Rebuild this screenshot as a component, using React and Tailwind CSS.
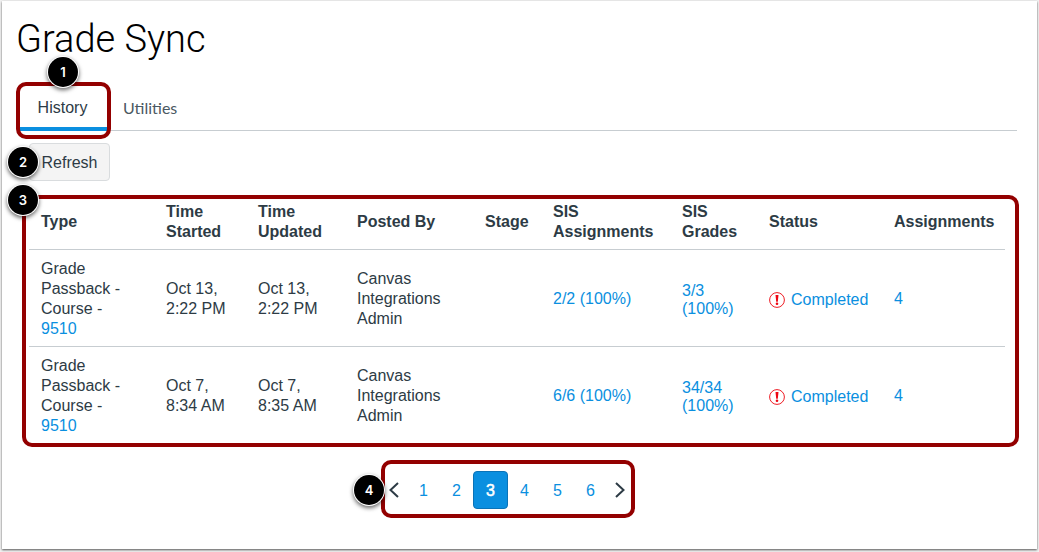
import React from "react";

const jobs = [
  { started: ["Oct 13,", "2:22 PM"], updated: ["Oct 13,", "2:22 PM"], assignments: "2/2 (100%)", grades: ["3/3", "(100%)"] },
  { started: ["Oct 7,", "8:34 AM"], updated: ["Oct 7,", "8:35 AM"], assignments: "6/6 (100%)", grades: ["34/34", "(100%)"] },
];

function Badge({ n, className }) {
  return (
    <span
      className={`absolute z-10 flex size-[30px] items-center justify-center rounded-full bg-black font-['Inter',sans-serif] text-[13px] font-semibold text-white ring-1 ring-white shadow-[0_2px_4px_1px_rgba(0,0,0,0.6)] ${className}`}
    >
      {n}
    </span>
  );
}

function Chevron({ d }) {
  return (
    <svg width="10" height="16" viewBox="0 0 10 16" fill="none" stroke="#2d3b45" strokeWidth="2" aria-hidden="true">
      <path d={d} />
    </svg>
  );
}

function Alert() {
  return (
    <svg className="shrink-0" width="16" height="16" viewBox="0 0 16 16" aria-hidden="true">
      <circle cx="8" cy="8" r="7.4" fill="none" stroke="#ee1c24" strokeWidth="1" />
      <path d="M6.5 3h3L8.8 9.7H7.2z" fill="#ee0612" />
      <circle cx="8" cy="11.8" r="1.3" fill="#ee0612" />
    </svg>
  );
}

function Lines({ items }) {
  return items.map((t) => (
    <span key={t} className="block whitespace-nowrap">{t}</span>
  ));
}

function Page({ n }) {
  return (
    <button type="button" className="h-[38px] w-[33px] pt-0.5 text-[#0a8fe0]">{n}</button>
  );
}

export default function App() {
  const link = "text-[#0a8fe0]";
  return (
    <div className="flex min-h-screen bg-[#f1f1f1] px-[2px] pt-px pb-[3px] font-['Liberation_Sans',Arial,sans-serif] text-base leading-5 text-[#2d3b45]">
      <main className="min-w-0 flex-1 bg-white pr-[18px] pl-[14px] shadow-[0_1px_2px_rgba(0,0,0,0.65)]">
        <h1 className="pt-4 font-['Roboto',sans-serif] text-[38px] leading-[44px] font-light text-black">Grade Sync</h1>

        <nav className="mt-[25px] mr-[2px] ml-1 flex border-b border-[#c7cdd1]">
          <a href="#history" className="relative -mb-px flex h-[45px] w-[87px] items-center justify-center border-b-4 border-[#0a8fe0] pt-0.5 pr-0.5">
            History
            <span className="absolute -inset-x-1 -top-1 -bottom-3 rounded-[10px] border-4 border-[#930000]" />
            <Badge n={1} className="-top-[29px] left-[28px]" />
          </a>
          <a href="#utilities" className="flex items-center pl-4 font-['Lato',sans-serif] text-[#4a5862]">Utilities</a>
        </nav>

        <div className="relative mt-3 flex">
          <button type="button" className="ml-[13px] h-[38px] w-[81px] rounded border border-[#d9dcde] bg-[#f4f4f4] pt-0.5">Refresh</button>
          <Badge n={2} className="top-1 -left-2" />
        </div>

        <section className="relative mt-[14px] ml-[6px] rounded-[10px] border-4 border-[#930000] pr-[10px] pl-[3px]">
          <Badge n={3} className="-top-[14px] -left-[18px]" />
          <table className="w-full table-fixed border-collapse text-left">
            <colgroup>
              <col className="w-[125px]" />
              <col className="w-[92px]" />
              <col className="w-[99px]" />
              <col className="w-[128px]" />
              <col className="w-[68px]" />
              <col className="w-[129px]" />
              <col className="w-[87px]" />
              <col className="w-[125px]" />
              <col className="w-[123px]" />
            </colgroup>
            <thead>
              <tr className="border-b border-[#c7cdd1]">
                {["Type", "Time Started", "Time Updated", "Posted By", "Stage", "SIS Assignments", "SIS Grades", "Status", "Assignments"].map((h) => (
                  <th key={h} scope="col" className="pt-[3px] pb-[7px] pl-3 font-bold">{h}</th>
                ))}
              </tr>
            </thead>
            <tbody>
              {jobs.map((j) => (
                <tr key={j.assignments} className="border-b border-[#c7cdd1] last:border-0">
                  <td className="pt-[9px] pb-[7px] pl-3">
                    <Lines items={["Grade", "Passback -", "Course -"]} />
                    <a href="#course" className={link}>9510</a>
                  </td>
                  <td className="pt-0.5 pl-3"><Lines items={j.started} /></td>
                  <td className="pt-0.5 pl-3"><Lines items={j.updated} /></td>
                  <td className="pt-0.5 pl-3"><Lines items={["Canvas", "Integrations", "Admin"]} /></td>
                  <td></td>
                  <td className="pt-0.5 pl-3"><a href="#assignments" className={link}>{j.assignments}</a></td>
                  <td className="pt-1 pl-3 leading-[18px]">
                    <a href="#grades" className={link}><Lines items={j.grades} /></a>
                  </td>
                  <td className="pt-1 pl-3">
                    <a href="#status" className={`flex items-center gap-[6px] ${link}`}><Alert />Completed</a>
                  </td>
                  <td className="pt-0.5 pl-3"><a href="#details" className={link}>4</a></td>
                </tr>
              ))}
            </tbody>
          </table>
        </section>

        <div className="mt-[13px] flex justify-center pr-[19px]">
          <nav aria-label="Pages" className="relative flex h-[58px] items-center rounded-[10px] border-4 border-[#930000] pt-0.5">
            <Badge n={4} className="top-[11px] -left-[31px]" />
            <button type="button" aria-label="Previous page" className="mr-[5px] flex w-[17px] justify-center">
              <Chevron d="M9 1 1.5 8 9 15" />
            </button>
            <Page n={1} />
            <Page n={2} />
            <button type="button" aria-current="page" className="h-[38px] w-[35px] rounded border border-[#0a73b8] bg-[#0a8fe0] pt-0.5 text-white [-webkit-text-stroke:0.5px_white]">3</button>
            <Page n={4} />
            <Page n={5} />
            <Page n={6} />
            <button type="button" aria-label="Next page" className="mr-[3px] ml-1 flex w-[17px] justify-center">
              <Chevron d="M1 1 8.5 8 1 15" />
            </button>
          </nav>
        </div>
      </main>
    </div>
  );
}
